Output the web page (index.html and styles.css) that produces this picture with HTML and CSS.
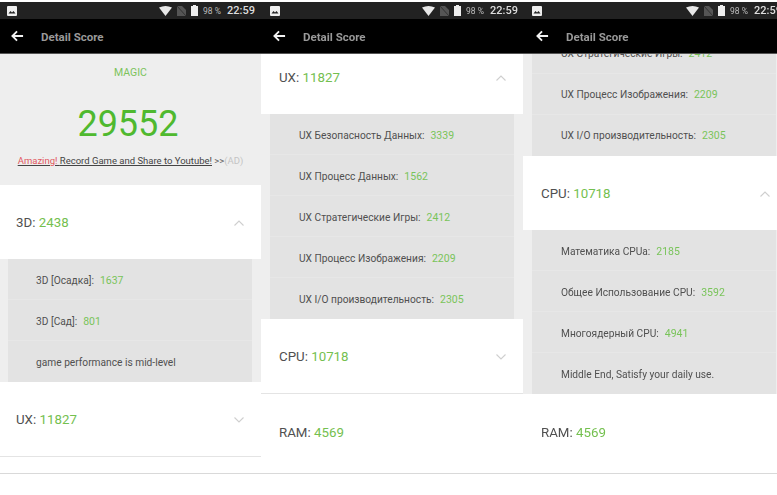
FILE: index.html
```html
<!DOCTYPE html>
<html>
<head>
    <title>Detail Score</title>
    <link rel="stylesheet" href="styles.css">
</head>
<body>
    <svg class="defs" width="0" height="0">
        <symbol id="i-pic" viewBox="0 0 10 10">
            <rect width="10" height="10" rx="1" fill="#eee"/>
            <path d="M1.5 7.5 3.5 5l1.5 1.500L6.500 5 8.500 7.500z" fill="#222"/>
        </symbol>
        <symbol id="i-wifi" viewBox="0 0 13 10">
            <path d="M0 1.500Q6.500-1.500 13 1.500L6.500 10z" fill="#e8e8e8"/>
        </symbol>
        <symbol id="i-sim" viewBox="0 0 9 10">
            <path d="M0 10V0h5l4 4v6z" fill="#555"/>
            <path d="M0 0 9 10" stroke="#333" stroke-width="1"/>
        </symbol>
        <symbol id="i-batt" viewBox="0 0 7 11">
            <path d="M2 0h3v1h2v10H0V1h2z" fill="#eee"/>
        </symbol>
        <symbol id="i-back" viewBox="0 0 14 12">
            <path d="M13 6H2M6.500 1 1.500 6l5 5" fill="none" stroke="#f2f2f2" stroke-width="2"/>
        </symbol>
        <symbol id="i-up" viewBox="0 0 10 6">
            <path d="M.5 5.500 5 1l4.500 4.500" fill="none" stroke="#cfcfcf" stroke-width="1.100"/>
        </symbol>
        <symbol id="i-down" viewBox="0 0 10 6">
            <path d="M.5.500 5 5 9.500.500" fill="none" stroke="#cfcfcf" stroke-width="1.100"/>
        </symbol>
    </svg>

    <div class="phones">
        <!-- first screen -->
        <div class="phone first">
            <div class="status">
                <svg class="pic"><use href="#i-pic"/></svg>
                <svg class="wifi"><use href="#i-wifi"/></svg>
                <svg class="sim"><use href="#i-sim"/></svg>
                <svg class="batt"><use href="#i-batt"/></svg>
                <span class="pct">98 %</span>
                <span class="time">22:59</span>
            </div>
            <div class="toolbar">
                <svg class="back"><use href="#i-back"/></svg>
                <span class="toolbar-title">Detail Score</span>
            </div>
            <div class="content">
                <div class="summary">
                    <div class="device">MAGIC</div>
                    <div class="total">29552</div>
                    <div class="promo"><u><span class="red">Amazing! </span>Record Game and Share to Youtube!</u> <span class="arrows">&gt;&gt;</span><span class="ad">(AD)</span></div>
                </div>
                <div class="card">
                    <span class="card-name">3D: <b>2438</b></span>
                    <svg class="chev"><use href="#i-up"/></svg>
                </div>
                <div class="list">
                    <div class="row">3D [Осадка]: <b>1637</b></div>
                    <div class="row">3D [Сад]: <b>801</b></div>
                    <div class="row">game performance is mid-level</div>
                </div>
                <div class="card lined">
                    <span class="card-name">UX: <b>11827</b></span>
                    <svg class="chev"><use href="#i-down"/></svg>
                </div>
                <div class="tail"></div>
            </div>
        </div>

        <!-- second screen -->
        <div class="phone second">
            <div class="status">
                <svg class="pic"><use href="#i-pic"/></svg>
                <svg class="wifi"><use href="#i-wifi"/></svg>
                <svg class="sim"><use href="#i-sim"/></svg>
                <svg class="batt"><use href="#i-batt"/></svg>
                <span class="pct">98 %</span>
                <span class="time">22:59</span>
            </div>
            <div class="toolbar">
                <svg class="back"><use href="#i-back"/></svg>
                <span class="toolbar-title">Detail Score</span>
            </div>
            <div class="content">
                <div class="card">
                    <span class="card-name">UX: <b>11827</b></span>
                    <svg class="chev"><use href="#i-up"/></svg>
                </div>
                <div class="list">
                    <div class="row">UX Безопасность Данных: <b>3339</b></div>
                    <div class="row">UX Процесс Данных: <b>1562</b></div>
                    <div class="row">UX Стратегические Игры: <b>2412</b></div>
                    <div class="row">UX Процесс Изображения: <b>2209</b></div>
                    <div class="row">UX I/O производительность: <b>2305</b></div>
                </div>
                <div class="card lined">
                    <span class="card-name">CPU: <b>10718</b></span>
                    <svg class="chev"><use href="#i-down"/></svg>
                </div>
                <div class="card last">
                    <span class="card-name">RAM: <b>4569</b></span>
                </div>
            </div>
        </div>

        <!-- third screen -->
        <div class="phone third">
            <div class="status">
                <svg class="pic"><use href="#i-pic"/></svg>
                <svg class="wifi"><use href="#i-wifi"/></svg>
                <svg class="sim"><use href="#i-sim"/></svg>
                <svg class="batt"><use href="#i-batt"/></svg>
                <span class="pct">98 %</span>
                <span class="time">22:59</span>
            </div>
            <div class="toolbar">
                <svg class="back"><use href="#i-back"/></svg>
                <span class="toolbar-title">Detail Score</span>
            </div>
            <div class="content">
                <div class="list">
                    <div class="row">UX Стратегические Игры: <b>2412</b></div>
                    <div class="row">UX Процесс Изображения: <b>2209</b></div>
                    <div class="row">UX I/O производительность: <b>2305</b></div>
                </div>
                <div class="card">
                    <span class="card-name">CPU: <b>10718</b></span>
                    <svg class="chev"><use href="#i-up"/></svg>
                </div>
                <div class="list">
                    <div class="row">Математика CPUa: <b>2185</b></div>
                    <div class="row">Общее Использование CPU: <b>3592</b></div>
                    <div class="row">Многоядерный CPU: <b>4941</b></div>
                    <div class="row">Middle End, Satisfy your daily use.</div>
                </div>
                <div class="card last">
                    <span class="card-name">RAM: <b>4569</b></span>
                </div>
            </div>
        </div>
    </div>
</body>
</html>
```

FILE: styles.css
```css
html, body {
    height: 100%;
}
body {
    margin: 0;
    padding-top: 2px;
    box-sizing: border-box;
    background-color: white;
    font-family: Roboto, sans-serif;
    overflow: hidden;
}
.defs {
    display: block;
    height: 0;
}
.phones {
    display: flex;
    height: 471px;
    border-bottom: 1px solid #d9d9d9;
    filter: blur(0.4px);
}
.phone {
    flex: 0 0 262px;
    display: flex;
    flex-direction: column;
    min-width: 0;
}
.phone.first {
    flex-basis: 261px;
}

/* status bar */
.status {
    height: 17px;
    flex: none;
    display: flex;
    align-items: center;
    background-color: #222;
    color: #ddd;
}
.pic {
    width: 10px;
    height: 10px;
    margin-left: 7px;
    margin-right: auto;
}
.second .pic {
    margin-left: 9px;
}
.third .pic {
    margin-left: 9px;
}
.wifi {
    width: 13px;
    height: 10px;
}
.sim {
    width: 9px;
    height: 10px;
    margin-left: 5px;
}
.batt {
    width: 7px;
    height: 11px;
    margin-left: 5px;
}
.pct {
    font-size: 8.500px;
    margin-left: 5px;
    width: 20px;
    color: #bbb;
}
.time {
    font-size: 11px;
    font-weight: 500;
    margin-left: 4px;
    margin-right: 6px;
}
.second .time {
    margin-right: 5px;
}
.third .time {
    margin-right: 3px;
}

/* toolbar */
.toolbar {
    height: 35px;
    flex: none;
    display: flex;
    align-items: center;
    background-color: #000;
    border-bottom: 1px solid #555;
    box-sizing: border-box;
}
.back {
    width: 13px;
    height: 12px;
    margin-left: 11px;
}
.second .back {
    margin-left: 12px;
}
.third .back {
    margin-left: 13px;
}
.toolbar-title {
    margin-left: 17px;
    padding-top: 1px;
    font-size: 11.500px;
    font-weight: 700;
    color: #999;
}

/* content */
.content {
    flex: 1;
    min-height: 0;
    overflow: hidden;
    background-color: #eee;
}
.second .content .card:first-child {
    margin-top: -14px;
}
.third .content .list:first-child {
    margin-top: -21px;
}
.third .content .list:first-child .row {
    padding-top: 0;
}
.summary {
    height: 131px;
    display: flex;
    flex-direction: column;
    align-items: center;
}
.device {
    margin-top: 12px;
    font-size: 10.500px;
    line-height: 13px;
    color: #7cc35c;
}
.total {
    margin-top: 24px;
    margin-right: 5px;
    font-size: 36px;
    line-height: 42px;
    color: #4fb92f;
}
.promo {
    margin-top: 9px;
    font-size: 9.500px;
    line-height: 13px;
    color: #444;
    white-space: nowrap;
}
.red {
    color: #e2585f;
}
.arrows {
    color: #666;
}
.ad {
    color: #c4c4c4;
}

.card {
    height: 74px;
    padding: 1px 17px 0 16px;
    display: flex;
    align-items: center;
    justify-content: space-between;
    background-color: white;
    box-sizing: border-box;
}
.second .card, .third .card {
    padding-left: 18px;
}
.third .card {
    padding-right: 15px;
}
.card.lined {
    height: 75px;
    border-bottom: 1px solid #e4e4e4;
}
.card.last {
    height: 80px;
    padding-top: 0;
    padding-bottom: 3px;
}
.card-name {
    font-size: 13.300px;
    color: #505050;
}
.card-name b {
    font-weight: 400;
    color: #74c04f;
}
.chev {
    width: 10px;
    height: 6px;
}
.tail {
    height: 16px;
    background-color: white;
}

.list {
    margin: 0 9px 0 8px;
    background-color: #e3e3e3;
}
.second .list, .third .list {
    margin-left: 9px;
}
.row {
    height: 41px;
    padding: 2px 0 0 28px;
    display: flex;
    align-items: center;
    gap: 6px;
    font-size: 10.200px;
    color: #505050;
    border-bottom: 1px solid #e7e7e7;
    box-sizing: border-box;
}
.second .row, .third .row {
    padding-left: 29px;
}
.row:last-child {
    border-bottom: none;
}
.row b {
    font-weight: 400;
    font-size: 10.500px;
    color: #79c45a;
}
```
